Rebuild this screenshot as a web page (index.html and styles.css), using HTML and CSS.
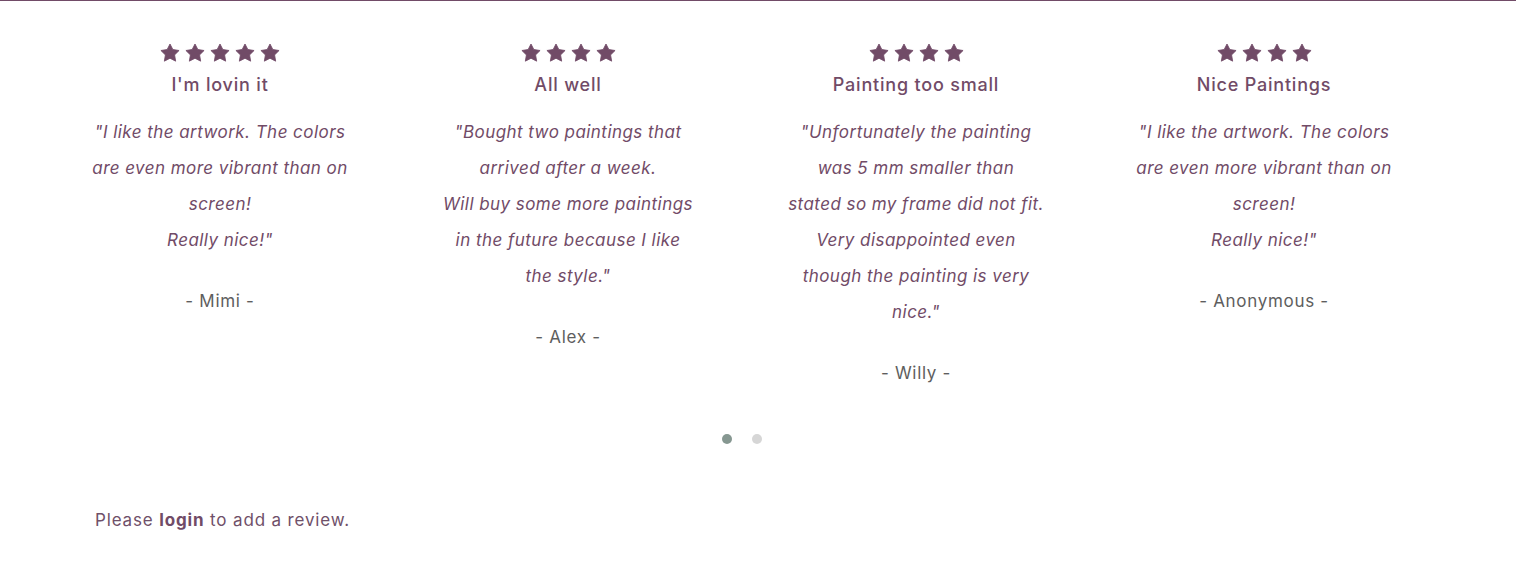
FILE: index.html
```html
<!DOCTYPE html>
<html lang="en">
<head>
<meta charset="utf-8">
<title>Reviews</title>
<link rel="stylesheet" href="styles.css">
</head>
<body>
<section class="reviews">
  <div class="carousel">
    <div class="items">
      <div class="review">
        <div class="stars">
          <svg class="star" viewBox="0 0 24 24"><path d="M12 1.2L15.4 7.8 22.9 9 17.5 14.3 18.8 21.8 12 18.3 5.2 21.8 6.5 14.3 1.1 9 8.6 7.8z"/></svg>
          <svg class="star" viewBox="0 0 24 24"><path d="M12 1.2L15.4 7.8 22.9 9 17.5 14.3 18.8 21.8 12 18.3 5.2 21.8 6.5 14.3 1.1 9 8.6 7.8z"/></svg>
          <svg class="star" viewBox="0 0 24 24"><path d="M12 1.2L15.4 7.8 22.9 9 17.5 14.3 18.8 21.8 12 18.3 5.2 21.8 6.5 14.3 1.1 9 8.6 7.8z"/></svg>
          <svg class="star" viewBox="0 0 24 24"><path d="M12 1.2L15.4 7.8 22.9 9 17.5 14.3 18.8 21.8 12 18.3 5.2 21.8 6.5 14.3 1.1 9 8.6 7.8z"/></svg>
          <svg class="star" viewBox="0 0 24 24"><path d="M12 1.2L15.4 7.8 22.9 9 17.5 14.3 18.8 21.8 12 18.3 5.2 21.8 6.5 14.3 1.1 9 8.6 7.8z"/></svg>
        </div>
        <h5 class="title">I'm lovin it</h5>
        <p class="quote">"I like the artwork. The colors<br>are even more vibrant than on<br>screen!<br>Really nice!"</p>
        <p class="author">- Mimi -</p>
      </div>
      <div class="review">
        <div class="stars">
          <svg class="star" viewBox="0 0 24 24"><path d="M12 1.2L15.4 7.8 22.9 9 17.5 14.3 18.8 21.8 12 18.3 5.2 21.8 6.5 14.3 1.1 9 8.6 7.8z"/></svg>
          <svg class="star" viewBox="0 0 24 24"><path d="M12 1.2L15.4 7.8 22.9 9 17.5 14.3 18.8 21.8 12 18.3 5.2 21.8 6.5 14.3 1.1 9 8.6 7.8z"/></svg>
          <svg class="star" viewBox="0 0 24 24"><path d="M12 1.2L15.4 7.8 22.9 9 17.5 14.3 18.8 21.8 12 18.3 5.2 21.8 6.5 14.3 1.1 9 8.6 7.8z"/></svg>
          <svg class="star" viewBox="0 0 24 24"><path d="M12 1.2L15.4 7.8 22.9 9 17.5 14.3 18.8 21.8 12 18.3 5.2 21.8 6.5 14.3 1.1 9 8.6 7.8z"/></svg>
        </div>
        <h5 class="title">All well</h5>
        <p class="quote">"Bought two paintings that<br>arrived after a week.<br>Will buy some more paintings<br>in the future because I like<br>the style."</p>
        <p class="author">- Alex -</p>
      </div>
      <div class="review">
        <div class="stars">
          <svg class="star" viewBox="0 0 24 24"><path d="M12 1.2L15.4 7.8 22.9 9 17.5 14.3 18.8 21.8 12 18.3 5.2 21.8 6.5 14.3 1.1 9 8.6 7.8z"/></svg>
          <svg class="star" viewBox="0 0 24 24"><path d="M12 1.2L15.4 7.8 22.9 9 17.5 14.3 18.8 21.8 12 18.3 5.2 21.8 6.5 14.3 1.1 9 8.6 7.8z"/></svg>
          <svg class="star" viewBox="0 0 24 24"><path d="M12 1.2L15.4 7.8 22.9 9 17.5 14.3 18.8 21.8 12 18.3 5.2 21.8 6.5 14.3 1.1 9 8.6 7.8z"/></svg>
          <svg class="star" viewBox="0 0 24 24"><path d="M12 1.2L15.4 7.8 22.9 9 17.5 14.3 18.8 21.8 12 18.3 5.2 21.8 6.5 14.3 1.1 9 8.6 7.8z"/></svg>
        </div>
        <h5 class="title">Painting too small</h5>
        <p class="quote">"Unfortunately the painting<br>was 5 mm smaller than<br>stated so my frame did not fit.<br>Very disappointed even<br>though the painting is very<br>nice."</p>
        <p class="author">- Willy -</p>
      </div>
      <div class="review">
        <div class="stars">
          <svg class="star" viewBox="0 0 24 24"><path d="M12 1.2L15.4 7.8 22.9 9 17.5 14.3 18.8 21.8 12 18.3 5.2 21.8 6.5 14.3 1.1 9 8.6 7.8z"/></svg>
          <svg class="star" viewBox="0 0 24 24"><path d="M12 1.2L15.4 7.8 22.9 9 17.5 14.3 18.8 21.8 12 18.3 5.2 21.8 6.5 14.3 1.1 9 8.6 7.8z"/></svg>
          <svg class="star" viewBox="0 0 24 24"><path d="M12 1.2L15.4 7.8 22.9 9 17.5 14.3 18.8 21.8 12 18.3 5.2 21.8 6.5 14.3 1.1 9 8.6 7.8z"/></svg>
          <svg class="star" viewBox="0 0 24 24"><path d="M12 1.2L15.4 7.8 22.9 9 17.5 14.3 18.8 21.8 12 18.3 5.2 21.8 6.5 14.3 1.1 9 8.6 7.8z"/></svg>
        </div>
        <h5 class="title">Nice Paintings</h5>
        <p class="quote">"I like the artwork. The colors<br>are even more vibrant than on<br>screen!<br>Really nice!"</p>
        <p class="author">- Anonymous -</p>
      </div>
    </div>
    <div class="dots">
      <span class="dot active"></span>
      <span class="dot"></span>
    </div>
  </div>
  <p class="login-note">Please <a class="login-link" href="#">login</a> to add a review.</p>
</section>
</body>
</html>
```

FILE: styles.css
```css
html, body {
  margin: 0;
  padding: 0;
  background: #ffffff;
}

body {
  font-family: Inter, "Open Sans", "Liberation Sans", sans-serif;
  color: #714b67;
}

.reviews {
  border-top: 1px solid #714b67;
}

.carousel {
  width: 1392px;
  margin-left: 46px;
}

.items {
  display: grid;
  grid-template-columns: repeat(4, 348px);
  align-items: start;
}

.review {
  text-align: center;
}

.stars {
  margin-top: 42px;
  height: 20px;
  display: flex;
  justify-content: center;
  gap: 5px;
}

.star {
  width: 20px;
  height: 20px;
  fill: #714b67;
  stroke: #714b67;
  stroke-width: 1;
  stroke-linejoin: round;
  display: block;
}

.title {
  margin: 10px 0 0;
  font-size: 18px;
  line-height: 24px;
  font-weight: 500;
  letter-spacing: 0.8px;
  color: #714b67;
}

.quote {
  margin: 17px 0 0;
  font-size: 17px;
  line-height: 36px;
  font-style: italic;
  letter-spacing: 0.45px;
  color: #714b67;
}

.author {
  margin: 25px 0 0;
  font-size: 17px;
  line-height: 36px;
  letter-spacing: 0.7px;
  color: #5e5e5e;
}

.dots {
  display: flex;
  justify-content: center;
  gap: 20px;
  margin-top: 43px;
  height: 10px;
}

.dot {
  width: 10px;
  height: 10px;
  border-radius: 50%;
  background: #d6d6d6;
}

.dot.active {
  background: #869791;
}

.login-note {
  margin: 63px 0 0 95px;
  font-size: 17px;
  line-height: 26px;
  letter-spacing: 0.85px;
  color: #6f5069;
}

.login-link {
  color: #714b67;
  font-weight: 700;
  text-decoration: none;
}
```
